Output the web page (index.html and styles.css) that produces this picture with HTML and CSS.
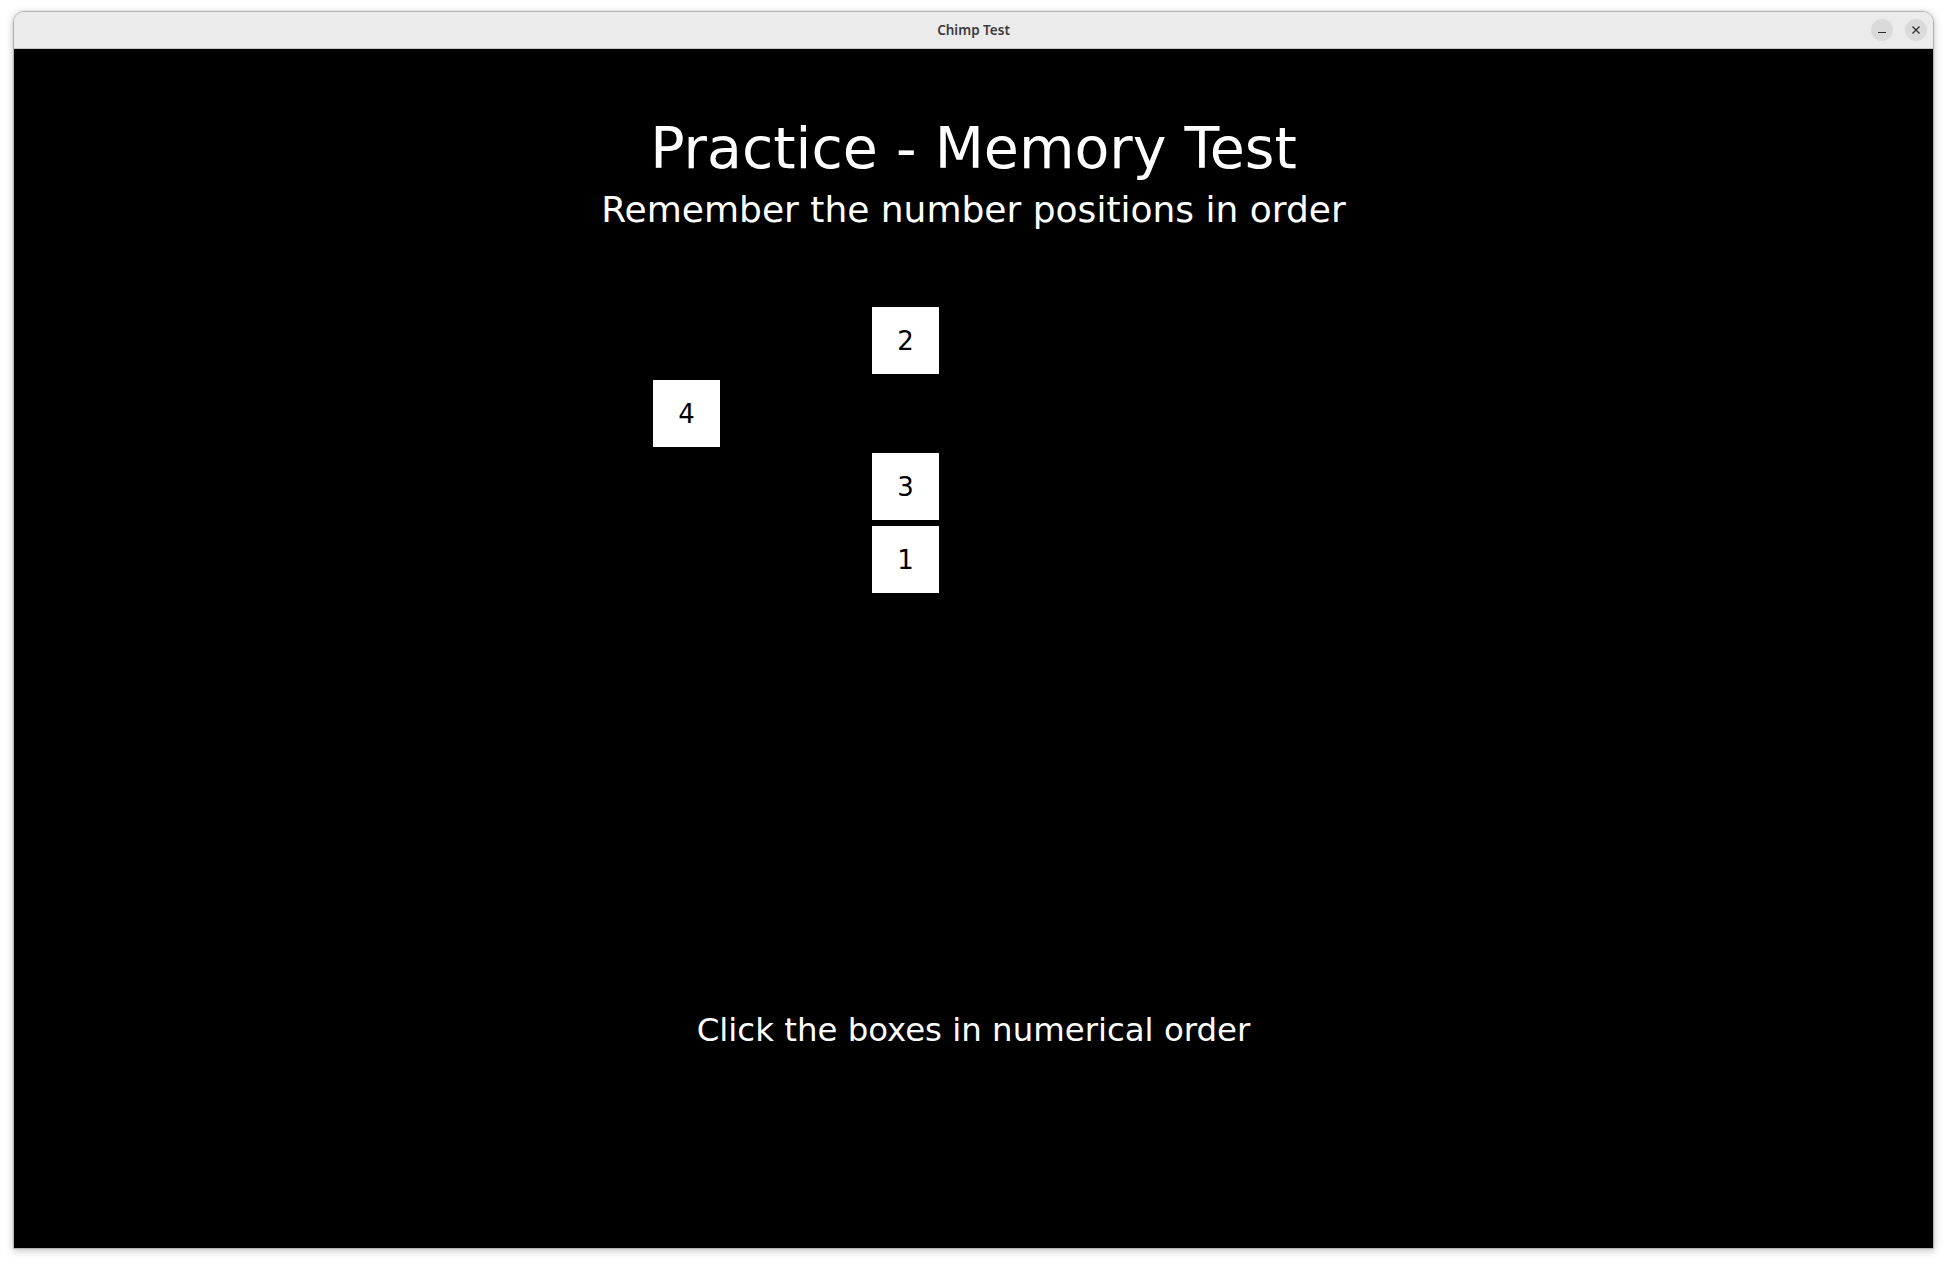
FILE: index.html
```html
<!DOCTYPE html>
<html lang="en">
<head>
    <meta charset="UTF-8">
    <title>Chimp Test</title>
    <link rel="stylesheet" href="styles.css">
</head>
<body>
    <div class="window">
        <div class="titlebar">
            <span class="window-title">Chimp Test</span>
            <div class="window-controls">
                <button class="ctl-btn" title="Minimize">
                    <svg width="10" height="10" viewBox="0 0 10 10"><line x1="1" y1="7.5" x2="9" y2="7.5" stroke="#2e2e2e" stroke-width="1.2"/></svg>
                </button>
                <button class="ctl-btn" title="Close">
                    <svg width="10" height="10" viewBox="0 0 10 10"><path d="M1.5 1.5 L8.5 8.5 M8.5 1.5 L1.5 8.5" stroke="#2e2e2e" stroke-width="1.3" fill="none"/></svg>
                </button>
            </div>
        </div>

        <div class="game">
            <h1 class="heading">Practice - Memory Test</h1>
            <p class="subheading">Remember the number positions in order</p>

            <div class="board-wrap">
                <div class="board" id="board"></div>
            </div>

            <p class="instructions">Click the boxes in numerical order</p>
        </div>
    </div>

    <script>
        // practice round: 4 numbers on a 4x4 grid (col, row)
        const cells = [
            { n: 2, col: 4, row: 1 },
            { n: 4, col: 1, row: 2 },
            { n: 3, col: 4, row: 3 },
            { n: 1, col: 4, row: 4 }
        ];

        const board = document.getElementById('board');
        cells.forEach(c => {
            const box = document.createElement('div');
            box.className = 'box';
            box.textContent = c.n;
            box.style.gridColumn = c.col;
            box.style.gridRow = c.row;
            board.appendChild(box);
        });
    </script>
</body>
</html>
```

FILE: styles.css
```css
* {
    margin: 0;
    padding: 0;
    box-sizing: border-box;
}

body {
    background: #ffffff;
    font-family: 'DejaVu Sans', sans-serif;
    height: 100vh;
    overflow: hidden;
}

.window {
    margin: 11px 0 0 13px;
    width: 1921px;
    height: 1238px;
    display: flex;
    flex-direction: column;
    border: 1px solid #b4b4b4;
    border-radius: 11px 11px 0 0;
    overflow: hidden;
    box-shadow: 0 2px 8px rgba(0, 0, 0, 0.22),
                0 0 2px rgba(0, 0, 0, 0.12);
}

.titlebar {
    height: 37px;
    flex-shrink: 0;
    background: #ebebeb;
    border-bottom: 1px solid #c4c4c4;
    display: flex;
    align-items: center;
    justify-content: center;
    position: relative;
}

.window-title {
    font-family: 'Noto Sans', sans-serif;
    font-size: 13.5px;
    font-weight: 600;
    color: #3b3b3b;
}

.window-controls {
    position: absolute;
    right: 6px;
    top: 7px;
    display: flex;
    gap: 12px;
}

.ctl-btn {
    width: 22px;
    height: 22px;
    border: none;
    border-radius: 50%;
    background: #dadada;
    display: flex;
    align-items: center;
    justify-content: center;
}

.game {
    flex: 1;
    background: #000;
    color: #fff;
    display: flex;
    flex-direction: column;
    padding-top: 67px;
}

.heading {
    font-size: 57px;
    font-weight: normal;
    line-height: 64px;
    text-align: center;
}

.subheading {
    font-size: 36px;
    line-height: 42px;
    margin-top: 9px;
    text-align: center;
}

.board-wrap {
    margin-top: 76px;
    padding-left: 639px;
}

.board {
    display: grid;
    grid-template-columns: repeat(4, 67px);
    grid-template-rows: repeat(4, 67px);
    gap: 6px;
}

.box {
    background: #fff;
    color: #000;
    font-size: 26px;
    display: flex;
    align-items: center;
    justify-content: center;
}

.instructions {
    margin-top: 418px;
    font-size: 32.4px;
    line-height: 38px;
    text-align: center;
}
```
